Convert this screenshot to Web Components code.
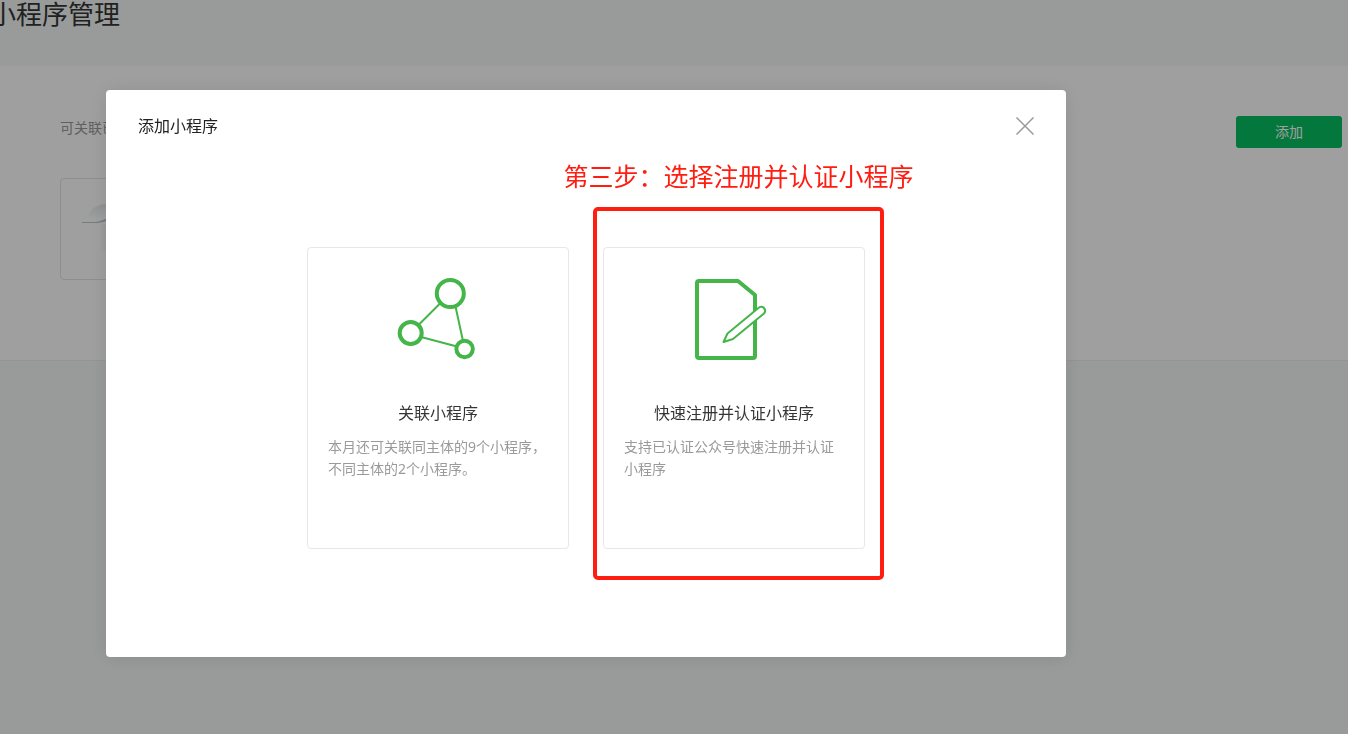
<!DOCTYPE html>
<html lang="zh-CN">
<head>
<meta charset="utf-8">
<title>小程序管理</title>
<style>
  html, body { height: 100%; }
  body {
    margin: 0;
    overflow: hidden;
    background: #f4f8f5;
    color: #353535;
    font-family: "Noto Sans", "Noto Sans CJK SC", sans-serif;
    font-size: 14px;
    line-height: 22px;
  }
</style>
</head>
<body>
<app-page heading="小程序管理">
  <app-panel>
    <span slot="tip">可关联已</span>
    <app-button slot="action">添加</app-button>
    <mini-thumb></mini-thumb>
  </app-panel>
</app-page>
<app-dialog heading="添加小程序">
  <option-card heading="关联小程序" icon="link">本月还可关联同主体的9个小程序，不同主体的2个小程序。</option-card>
  <option-card heading="快速注册并认证小程序" icon="register" note="第三步：选择注册并认证小程序">支持已认证公众号快速注册并认证小程序</option-card>
</app-dialog>

<script>
class BaseElement extends HTMLElement {
  constructor() {
    super();
    this.attachShadow({ mode: 'open' });
  }

  connectedCallback() {
    if (!this.rendered) {
      this.render();
      this.rendered = true;
    }
  }
}

class AppPage extends BaseElement {
  render() {
    this.shadowRoot.innerHTML = `
      <style>
        :host { display: block; }
        h1 {
          margin: 0 0 0 -10px;
          height: 66px;
          font-size: 26px;
          font-weight: 400;
          line-height: 28px;
        }
      </style>
      <h1>${this.getAttribute('heading')}</h1>
      <slot></slot>
    `;
  }
}
customElements.define('app-page', AppPage);

class AppPanel extends BaseElement {
  render() {
    this.shadowRoot.innerHTML = `
      <style>
        :host {
          display: block;
          padding: 50px 6px 80px 60px;
          background: #fff;
          border-bottom: 1px solid #eceeed;
        }
        header {
          display: flex;
          justify-content: space-between;
          align-items: flex-start;
          margin-bottom: 30px;
        }
        .tip { color: #9a9a9a; line-height: 24px; }
      </style>
      <header>
        <div class="tip"><slot name="tip"></slot></div>
        <slot name="action"></slot>
      </header>
      <slot></slot>
    `;
  }
}
customElements.define('app-panel', AppPanel);

class AppButton extends BaseElement {
  render() {
    this.shadowRoot.innerHTML = `
      <style>
        :host { display: block; }
        button {
          display: block;
          min-width: 106px;
          height: 32px;
          padding: 0 22px;
          border: 0;
          border-radius: 3px;
          background: #07c160;
          color: #fff;
          font: inherit;
          cursor: pointer;
        }
      </style>
      <button type="button"><slot></slot></button>
    `;
  }
}
customElements.define('app-button', AppButton);

class MiniThumb extends BaseElement {
  render() {
    this.shadowRoot.innerHTML = `
      <style>
        :host {
          display: block;
          box-sizing: border-box;
          width: 262px;
          height: 102px;
          padding: 20px;
          border: 1px solid #e4e4e4;
          border-radius: 4px;
        }
        svg { display: block; }
      </style>
      <svg width="60" height="60" viewBox="0 0 60 60" aria-hidden="true">
        <defs>
          <linearGradient id="dome" x1="0" y1="0" x2="0" y2="1">
            <stop offset="0" stop-color="#e2e9ec"/>
            <stop offset="1" stop-color="#fff"/>
          </linearGradient>
          <linearGradient id="haze" x1="0" y1="0" x2="1" y2="0">
            <stop offset="0" stop-color="#fff"/>
            <stop offset="1" stop-color="#e6ecee"/>
          </linearGradient>
        </defs>
        <path d="M8 14C12 8 19 5 30 4v16H8z" fill="url(#dome)"/>
        <path d="M19 25h12v27H19z" fill="url(#haze)"/>
        <path d="M1 24v-1h14l4-1 3-1 4-2v3l-4 1-6 1z" fill="#bcc8ca"/>
      </svg>
    `;
  }
}
customElements.define('mini-thumb', MiniThumb);

class AppDialog extends BaseElement {
  render() {
    this.shadowRoot.innerHTML = `
      <style>
        /* the mask covers the whole window */
        :host {
          position: fixed;
          inset: 0;
          display: flex;
          align-items: flex-start;
          padding: 90px 106px;
          background: rgba(0, 0, 0, .376);
        }
        section {
          flex: 0 1 960px;
          border-radius: 4px;
          background: #fff;
          box-shadow: 0 1px 20px rgba(0, 0, 0, .1);
        }
        header {
          display: flex;
          justify-content: space-between;
          align-items: center;
          height: 72px;
          padding: 0 30px 0 32px;
        }
        h2 {
          margin: 0;
          color: #222;
          font-size: 16px;
          font-weight: 400;
          line-height: 24px;
        }
        button {
          padding: 0;
          border: 0;
          background: none;
          color: #9a9a9a;
          cursor: pointer;
        }
        svg { display: block; }
        .body {
          display: flex;
          justify-content: center;
          gap: 34px;
          padding: 85px 32px 108px;
        }
      </style>
      <section role="dialog" aria-labelledby="title">
        <header>
          <h2 id="title">${this.getAttribute('heading')}</h2>
          <button type="button" aria-label="关闭">
            <svg width="22" height="22" viewBox="0 0 22 22" fill="none" stroke="currentColor" stroke-width="1.5">
              <path d="M2.500 2.500l17 17M19.500 2.500l-17 17"/>
            </svg>
          </button>
        </header>
        <div class="body"><slot></slot></div>
      </section>
    `;
  }
}
customElements.define('app-dialog', AppDialog);

const icons = {
  link: `
    <path d="M52 33.500L30 55.500M67.500 36.500L75 71M33 67l36 9.500" stroke-width="2"/>
    <circle cx="62.300" cy="23.500" r="13.500"/>
    <circle cx="22.700" cy="63" r="11"/>
    <circle cx="76.600" cy="79" r="8.200"/>`,
  register: `
    <path d="M15 11h39l17 14v61a2 2 0 0 1-2 2H15a2 2 0 0 1-2-2V13a2 2 0 0 1 2-2z"/>
    <path d="M39.500 72l4-8.500L75 37.500c4-2.500 8 2.500 5 6L49 69z" fill="#fff" stroke-width="2"/>`
};

class OptionCard extends BaseElement {
  render() {
    const note = this.getAttribute('note');

    this.shadowRoot.innerHTML = `
      <style>
        :host {
          position: relative;
          display: block;
          box-sizing: border-box;
          width: 262px;
          min-height: 302px;
          padding: 22px 20px;
          border: 1px solid #e7e7eb;
          border-radius: 4px;
        }
        svg { display: block; margin: 0 auto; }
        h3 {
          margin: 31px 0 11px;
          font-size: 16px;
          font-weight: 400;
          line-height: 24px;
          text-align: center;
        }
        p { margin: 0; color: #9a9a9a; }
        /* marker frame drawn over the card */
        .frame {
          position: absolute;
          inset: -41px -20px -32px -11px;
          border: 4px solid #ff1d10;
          border-radius: 5px;
          pointer-events: none;
        }
        .note {
          position: absolute;
          bottom: 100%;
          left: 50%;
          transform: translateX(-50%);
          padding-bottom: 17px;
          color: #ff1d10;
          font-size: 25px;
          line-height: 36px;
          white-space: nowrap;
        }
      </style>
      <svg width="100" height="100" viewBox="0 0 100 100" fill="none" stroke="#44b549" stroke-width="4" stroke-linejoin="round" aria-hidden="true">${icons[this.getAttribute('icon')]}</svg>
      <h3>${this.getAttribute('heading')}</h3>
      <p><slot></slot></p>
      ${note ? `<div class="frame"><span class="note">${note}</span></div>` : ''}
    `;
  }
}
customElements.define('option-card', OptionCard);
</script>
</body>
</html>
